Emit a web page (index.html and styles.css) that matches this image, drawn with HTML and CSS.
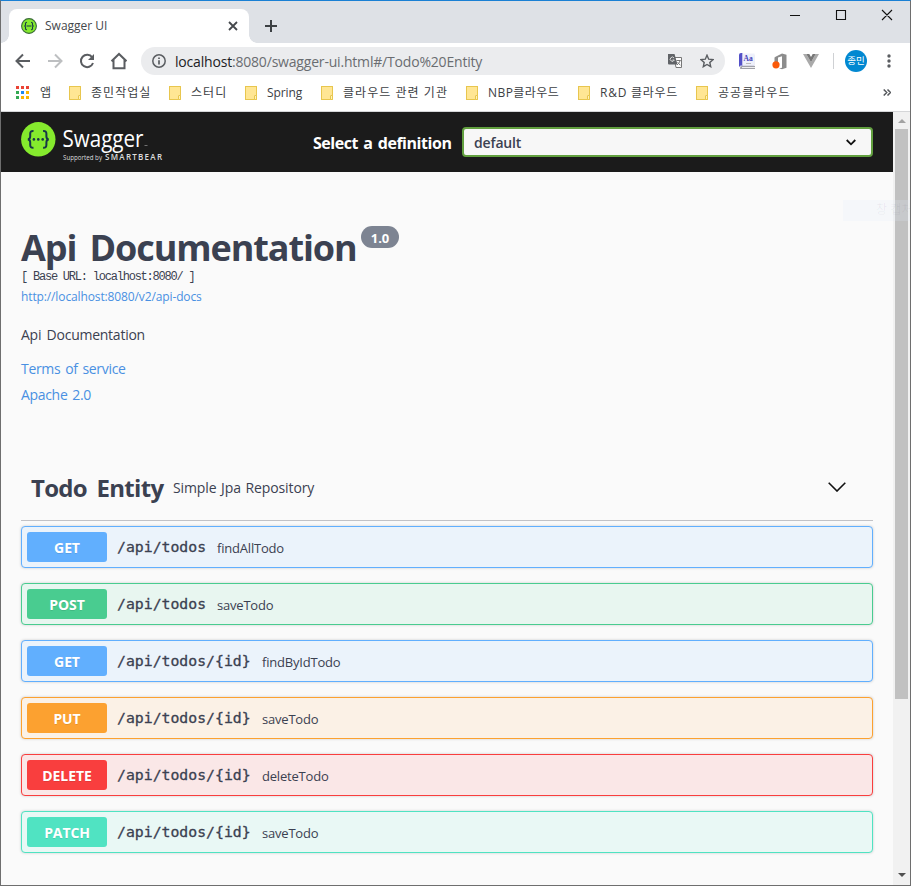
FILE: index.html
```html
<!DOCTYPE html>
<html lang="ko">
<head>
<meta charset="utf-8">
<title>Swagger UI</title>
<link rel="stylesheet" href="styles.css">
</head>
<body>
<div class="window">
  <div class="tabstrip">
    <div class="tab">
      <svg class="favicon" width="16" height="16" viewBox="0 0 16 16"><circle cx="8" cy="8" r="7.4" fill="#85ea2d" stroke="#3b6b3b" stroke-width="1.1"/><path d="M6 4.2q-1.5 0-1.5 1.4v1.1q0 1.3-1.2 1.3 1.2 0 1.2 1.3v1.1q0 1.4 1.5 1.4M10 4.2q1.5 0 1.5 1.4v1.1q0 1.3 1.2 1.3-1.2 0-1.2 1.3v1.1q0 1.4-1.5 1.4M5.5 8h5" fill="none" stroke="#173647" stroke-width="1.1"/></svg>
      <span class="tab-title">Swagger UI</span>
      <svg class="tab-close" width="10" height="10" viewBox="0 0 10 10"><path d="M1 1l8 8M9 1l-8 8" stroke="#45484c" stroke-width="1.8"/></svg>
    </div>
    <svg class="new-tab" width="12" height="12" viewBox="0 0 12 12"><path d="M6 0v12M0 6h12" stroke="#3c4043" stroke-width="2"/></svg>
    <svg class="window-controls" width="104" height="12" viewBox="0 0 104 12"><path d="M0 6.5h10M46.500 1.500h9v9h-9zM92 1l10 10M102 1l-10 10" fill="none" stroke="#111" stroke-width="1.1"/></svg>
  </div>

  <div class="toolbar">
    <svg class="nav" width="112" height="18" viewBox="0 0 112 18"><g fill="none" stroke-width="2"><path d="M15 9H2M8 2.500L1.500 9 8 15.500" stroke="#5a5d61"/><path d="M33 9h13M40 2.500L46.500 9 40 15.500" stroke="#bdbfc1"/><path d="M77.200 5.300A6.200 6.200 0 1 0 78 11" stroke="#5a5d61"/><path d="M98.500 8v8.200h11V8M96.500 9.200L104 2l7.500 7.200" stroke="#5a5d61"/></g><path d="M79 2v6h-6z" fill="#5a5d61"/></svg>
    <div class="omnibox">
      <svg class="info" width="14" height="14" viewBox="0 0 14 14"><circle cx="7" cy="7" r="6.200" fill="none" stroke="#5a5d61" stroke-width="1.500"/><path d="M7 6.200v4.200M7 3.500v1.500" stroke="#5a5d61" stroke-width="1.700"/></svg>
      <span class="url"><b>localhost</b>:8080/swagger-ui.html#/Todo%20Entity</span>
      <svg class="translate" width="14" height="14" viewBox="0 0 14 14"><path d="M6 3.500h7.500v10H8z" fill="#fff" stroke="#777" stroke-width="1"/><path d="M0 0h6.500l3 10.500H1a1 1 0 0 1-1-1z" fill="#606367"/><path d="M6.100 4A2.100 2.100 0 1 0 6.300 6H4.500" fill="none" stroke="#ddd" stroke-width="1"/><path d="M8.500 6.500h4.300M12 7q-1 2.500-3 4M9.600 8.300l2.800 3" fill="none" stroke="#777" stroke-width="1"/></svg>
      <svg class="star" width="14" height="14" viewBox="0 0 14 14"><path d="M7 1.200l1.700 4 4.300.4-3.200 2.900.9 4.200L7 10.500l-3.700 2.200.9-4.200L1 5.600l4.300-.4z" fill="none" stroke="#5a5d61" stroke-width="1.400"/></svg>
    </div>
    <div class="extensions">
      <svg width="17" height="17" viewBox="0 0 17 17"><path d="M1.500 1h13l1 1v13.500H2.500A2 2 0 0 1 .8 14V2z" fill="#d9dae8"/><path d="M0 2q0-2 2-2h1.500v12.500H1.500L0 14z" fill="#5350c8"/><path d="M3.500.5h12V12h-12z" fill="#eef0fb"/><path d="M1 15.500q0-2.500 2-2.500h13v3H2.500q-1.500 0-1.500-.5" fill="#a0a1a8"/><path d="M3 14.500h13" stroke="#eee"/><path d="M7 10.500h5" stroke="#bbb"/><text x="4.500" y="8" class="dict-glyph">Aa</text></svg>
      <svg width="15" height="17" viewBox="0 0 15 17"><path d="M4 3.500L10 .5l4.500 1.300v13L10 16.300l-3-1 3-.6V3.300L6 4.500v6H2.500V4.500z" fill="#8c8c8c"/><circle cx="4" cy="11.800" r="3.600" fill="#fa5a0a"/></svg>
      <svg width="16" height="14" viewBox="0 0 16 14"><path d="M0 0h3.300L8 8.200 12.700 0H16L8 14z" fill="#aaa"/><path d="M3.300 0h3L8 3l1.700-3h3L8 8.200z" fill="#777"/></svg>
    </div>
    <span class="divider"></span>
    <span class="profile">종민</span>
    <svg class="more" width="4" height="14" viewBox="0 0 4 14"><g fill="#5a5d61"><circle cx="2" cy="2" r="1.700"/><circle cx="2" cy="7" r="1.700"/><circle cx="2" cy="12" r="1.700"/></g></svg>
  </div>

  <div class="bookmarks">
    <svg class="apps" width="13" height="13" viewBox="0 0 13 13"><path d="M0 0h3v3H0zM5 0h3v3H5zM10 0h3v3h-3z" fill="#ea4335"/><path d="M0 5h3v3H0zM0 10h3v3H0z" fill="#34a853"/><path d="M5 5h3v3H5z" fill="#1e88f0"/><path d="M10 5h3v3h-3zM5 10h3v3H5zM10 10h3v3h-3z" fill="#fbb400"/></svg>
    <span class="bm bm-apps">앱</span>
    <i class="folder"></i><span class="bm bm-work">종민작업실</span>
    <i class="folder"></i><span class="bm bm-study">스터디</span>
    <i class="folder"></i><span class="bm bm-spring">Spring</span>
    <i class="folder"></i><span class="bm bm-org">클라우드 관련 기관</span>
    <i class="folder"></i><span class="bm bm-nbp">NBP클라우드</span>
    <i class="folder"></i><span class="bm bm-rnd">R&amp;D 클라우드</span>
    <i class="folder"></i><span class="bm bm-public">공공클라우드</span>
    <svg class="overflow" width="8" height="7" viewBox="0 0 8 7"><path d="M.7.500l3 3-3 3M4.500.500l3 3-3 3" fill="none" stroke="#55585c" stroke-width="1.500"/></svg>
  </div>

  <div class="viewport">
    <div class="page">
      <header class="topbar">
        <svg class="logo" width="142" height="42" viewBox="0 0 142 42"><circle cx="17.300" cy="18.300" r="17.200" fill="#85ea2d"/><path d="M12.500 10q-3.300-.2-3.300 2.700v2.900q0 2.700-2.400 2.800 2.400.1 2.400 2.800v2.900q0 2.900 3.300 2.700M22.100 10q3.300-.2 3.300 2.700v2.900q0 2.700 2.400 2.800-2.400.1-2.400 2.800v2.900q0 2.900-3.300 2.700" fill="none" stroke="#173647" stroke-width="2"/><g fill="#173647"><circle cx="12.900" cy="18.400" r="1.300"/><circle cx="17.300" cy="18.400" r="1.300"/><circle cx="21.700" cy="18.400" r="1.300"/></g><text x="41.500" y="26" class="logo-name" textLength="81" lengthAdjust="spacingAndGlyphs">Swagger</text><path d="M123.500 24.500h3" stroke="#888" stroke-width=".8"/><text x="42" y="39" class="logo-by" textLength="39" lengthAdjust="spacingAndGlyphs">Supported by</text><text x="84" y="39" class="logo-sb" textLength="57" lengthAdjust="spacing">SMARTBEAR</text></svg>
        <span class="select-label">Select a definition</span>
        <div class="select"><span>default</span><svg width="10" height="7" viewBox="0 0 10 7"><path d="M.7 1L5 5.300 9.300 1" fill="none" stroke="#111" stroke-width="1.800"/></svg></div>
      </header>
      <main class="content">
        <section class="info-block">
          <h1><span class="title">Api Documentation</span><span class="version">1.0</span></h1>
          <div class="base-url">[ Base URL: localhost:8080/ ]</div>
          <a class="docs-link">http://localhost:8080/v2/api-docs</a>
          <p class="description">Api Documentation</p>
          <a class="terms">Terms of service</a>
          <a class="license">Apache 2.0</a>
        </section>
        <section>
          <h2 class="tag"><span class="tag-name">Todo Entity</span><span class="tag-desc">Simple Jpa Repository</span><svg width="18" height="10" viewBox="0 0 18 10"><path d="M.7.700L9 9 17.300.700" fill="none" stroke="#111" stroke-width="1.600"/></svg></h2>
          <div class="op get"><span class="method">GET</span><span class="path short">/api/todos</span><span class="summary">findAllTodo</span></div>
          <div class="op post"><span class="method">POST</span><span class="path short">/api/todos</span><span class="summary">saveTodo</span></div>
          <div class="op get"><span class="method">GET</span><span class="path">/api/todos/{id}</span><span class="summary">findByIdTodo</span></div>
          <div class="op put"><span class="method">PUT</span><span class="path">/api/todos/{id}</span><span class="summary">saveTodo</span></div>
          <div class="op delete"><span class="method">DELETE</span><span class="path">/api/todos/{id}</span><span class="summary">deleteTodo</span></div>
          <div class="op patch"><span class="method">PATCH</span><span class="path">/api/todos/{id}</span><span class="summary">saveTodo</span></div>
        </section>
      </main>
    </div>
    <div class="scrollbar"><i class="up"></i><i class="thumb"></i><i class="down"></i></div>
  </div>
  <div class="capture-hint">창 캡처</div>
</div>
</body>
</html>
```
FILE: styles.css
```css
*, *::before, *::after { box-sizing: border-box; }
body { margin: 0; font-family: "Open Sans", "Noto Sans CJK KR", sans-serif; color: #3b4151; }
svg { display: block; flex: none; }
.window { position: relative; width: 911px; height: 886px; border: 1px solid #6e6e6e; border-top-color: #1a80d4; display: flex; flex-direction: column; background: #fff; overflow: hidden; }

.tabstrip { height: 42px; flex: none; background: #dee1e6; display: flex; }
.tab { position: relative; width: 240px; height: 34px; margin: 8px 0 0 8px; background: #fff; border-radius: 8px 8px 0 0; display: flex; align-items: center; padding: 0 11px 0 12px; }
.tab::before, .tab::after { content: ""; position: absolute; bottom: 0; width: 8px; height: 8px; }
.tab::before { left: -8px; background: radial-gradient(circle at 0 0, #dee1e6 7.500px, #fff 8px); }
.tab::after { right: -8px; background: radial-gradient(circle at 100% 0, #dee1e6 7.500px, #fff 8px); }
.tab-title { font-size: 12px; line-height: 16px; margin: 0 0 0 8px; color: #45484c; flex: 1; }
.new-tab { margin: 19px 0 0 16px; }
.window-controls { margin: 8px 16px 0 auto; }

.toolbar { height: 36px; flex: none; display: flex; align-items: center; padding-left: 14px; }
.omnibox { width: 584px; height: 28px; margin-left: 14px; border-radius: 14px; background: #ebecee; display: flex; align-items: center; padding: 0 11px; }
.url { flex: 1; margin-left: 9px; font-size: 14px; color: #6a6d71; white-space: nowrap; letter-spacing: -.19px; }
.url b { font-weight: 400; color: #202124; }
.star { margin-left: 18px; }
.extensions { display: flex; align-items: center; margin-left: 14px; gap: 16px; }
.dict-glyph { font: bold 7.500px "Liberation Serif", serif; fill: #4340b8; }
.divider { width: 1px; height: 16px; background: #cfd1d4; margin-left: 14px; }
.profile { width: 22px; height: 22px; margin-left: 11px; border-radius: 50%; background: #0288d1; color: #fff; font-size: 9.500px; line-height: 21px; text-align: center; white-space: nowrap; }
.more { margin-left: 20px; }

.bookmarks { height: 33px; flex: none; display: flex; align-items: center; padding: 0 0 5px 15px; border-bottom: 1px solid #d5d6d8; }
.bm { font-size: 12px; line-height: 18px; color: #3c4043; white-space: nowrap; flex: none; letter-spacing: 1.050px; }
.bm-apps { width: 29px; margin-left: 11px; }
.folder { position: relative; flex: none; width: 12px; height: 14px; background: #ffe694; border: 1px solid #e8c64e; margin-right: 10px; }
.folder::after { content: ""; position: absolute; right: -1px; bottom: -1px; width: 3px; height: 5px; border: 1px solid #e8c64e; border-radius: 1px; background: #fff3b8; }
.bm-work { width: 78px; }
.bm-study { width: 54px; }
.bm-spring { width: 54px; letter-spacing: -.1px; }
.bm-org { width: 123px; }
.bm-nbp { width: 90px; letter-spacing: .45px; }
.bm-rnd { width: 96px; letter-spacing: .75px; }
.bm-public { width: 90px; }
.overflow { margin: 0 19px 0 auto; }

.viewport { flex: 1; min-height: 0; display: flex; background: #fafafa; }
.page { width: 892px; }
.topbar { height: 60px; background: #1b1b1b; display: flex; align-items: center; padding: 0 20px; }
.logo-name { font: 24px "Open Sans", sans-serif; fill: #fff; }
.logo-by { font: 6.500px "Open Sans", sans-serif; fill: #ddd; }
.logo-sb { font: 600 8px "Open Sans", sans-serif; fill: #ddd; }
.select-label { margin-left: 150px; width: 149px; color: #fff; font-size: 16px; font-weight: 700; white-space: nowrap; letter-spacing: -.45px; word-spacing: 1.500px; padding-top: 1px; }
.select { width: 411px; height: 30px; border: 2px solid #62a03f; border-radius: 4px; background: #f7f7f7; display: flex; align-items: center; justify-content: space-between; padding: 0 15px 0 10px; font-size: 14px; font-weight: 600; letter-spacing: -.15px; }

.content { padding: 52px 20px 0; }
.info-block { display: flex; flex-direction: column; height: 234px; }
h1 { margin: 0; display: flex; height: 45px; line-height: 48px; font-size: 36px; font-weight: 700; white-space: nowrap; }
.title { width: 340px; letter-spacing: -1.100px; word-spacing: 5px; }
.version { width: 38px; height: 22px; margin-top: 2px; border-radius: 11px; background: #7d8492; color: #fff; font-size: 13px; font-weight: 700; line-height: 24px; text-align: center; }
.base-url { font: 12px/16px "Liberation Mono", monospace; letter-spacing: -1.220px; white-space: pre; }
.docs-link { font-size: 12px; line-height: 20px; margin-top: 2px; letter-spacing: -.12px; }
a { color: #4990e2; }
.description { margin: 17px 0 0; font-size: 14px; line-height: 22px; letter-spacing: -.25px; word-spacing: 2px; }
.terms, .license { font-size: 14px; line-height: 22px; letter-spacing: -.32px; word-spacing: 1.500px; }
.terms { margin-top: 12px; }
.license { margin-top: 4px; }
.tag { display: flex; align-items: center; margin: 0 0 5px; height: 63px; border-bottom: 1px solid #c2c2c6; padding: 0 27px 4px 10px; }
.tag-name { width: 142px; font-size: 24px; white-space: nowrap; letter-spacing: -.7px; word-spacing: 4px; }
.tag-desc { flex: 1; font-size: 14px; font-weight: 400; letter-spacing: -.1px; word-spacing: 1px; }
.op { height: 42px; margin-bottom: 15px; border: 1px solid; border-radius: 4px; box-shadow: 0 0 3px rgba(0,0,0,.19); display: flex; align-items: center; padding: 0 5px; }
.method { width: 80px; height: 30px; border-radius: 3px; color: #fff; font-size: 14px; font-weight: 700; line-height: 32px; text-align: center; text-shadow: 0 1px 0 rgba(0,0,0,.1); letter-spacing: -.1px; }
.path { width: 145px; padding-left: 10px; font: 14.800px/20px "DejaVu Sans Mono", monospace; -webkit-text-stroke: .3px #3b4151; white-space: nowrap; }
.path.short { width: 100px; }
.summary { margin-left: 10px; font-size: 13px; line-height: 18px; padding-top: 2px; letter-spacing: -.2px; }
.get { border-color: #61affe; background: #ebf3fb; }
.get .method { background: #61affe; }
.post { border-color: #49cc90; background: #e8f6f0; }
.post .method { background: #49cc90; }
.put { border-color: #fca130; background: #fbf1e6; }
.put .method { background: #fca130; }
.delete { border-color: #f93e3e; background: #fae7e7; }
.delete .method { background: #f93e3e; }
.patch { border-color: #50e3c2; background: #e9f8f5; }
.patch .method { background: #50e3c2; }

.scrollbar { width: 17px; background: #f1f1f1; display: flex; flex-direction: column; align-items: center; }
.up { border: 4px solid transparent; border-top: 0; border-bottom-color: #a3a3a3; margin-top: 7px; }
.thumb { width: 13px; height: 570px; margin-top: 6px; background: #c1c1c1; }
.down { border: 4px solid transparent; border-bottom: 0; border-top-color: #505050; margin: auto 0 8px; }
.capture-hint { position: absolute; left: 842px; top: 199px; width: 68px; height: 21px; background: rgba(225,235,250,.2); color: rgba(60,70,90,.07); font-size: 12px; line-height: 20px; text-indent: 33px; white-space: nowrap; overflow: hidden; }
```
